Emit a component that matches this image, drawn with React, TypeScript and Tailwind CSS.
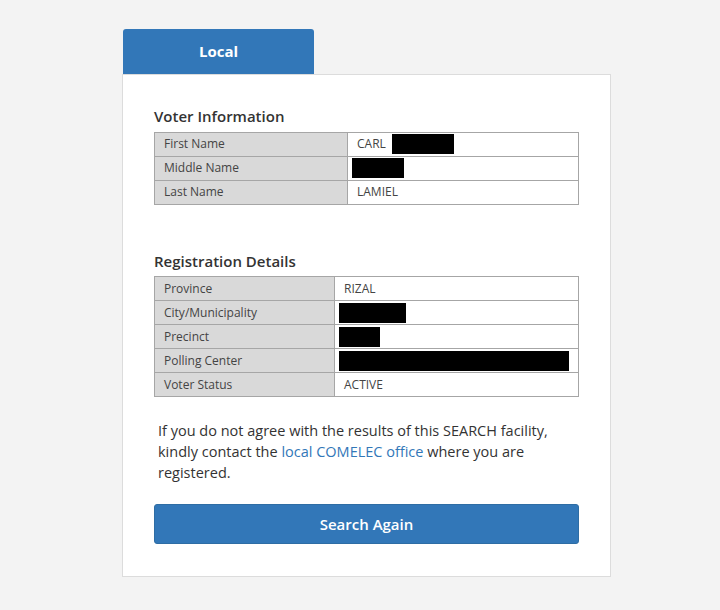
import React from "react";

const font = { fontFamily: '"Open Sans", "Noto Sans", sans-serif' };

function Redact({ w }: { w: number }) {
  return <span className="inline-block bg-black align-middle" style={{ width: w, height: 20 }} />;
}

type Row = { label: string; value: React.ReactNode };

function InfoTable({ rows, labelW }: { rows: Row[]; labelW: string }) {
  return (
    <table className="w-full border-collapse text-[12px] text-[#444]">
      <tbody>
        {rows.map((r, i) => (
          <tr key={i} className="h-[24px]">
            <td className={`${labelW} border border-[#a6a6a6] bg-[#d9d9d9] px-[9px] py-0`}>{r.label}</td>
            <td className="border border-[#a6a6a6] bg-white px-[4px] py-0">{r.value}</td>
          </tr>
        ))}
      </tbody>
    </table>
  );
}

export default function App() {
  return (
    <div className="min-h-[610px] w-[720px] bg-[#f3f3f3] pt-[29px]" style={font}>
      <div className="ml-[122px] w-[489px]">
        <div className="ml-[1px] flex h-[45px] w-[191px] items-center justify-center rounded-t-[3px] bg-[#3277b8] text-[15px] font-bold text-white">
          Local
        </div>
        <div className="h-[503px] border border-[#dcdcdc] bg-white px-[31px] pt-[30px]">
          <h2 className="mb-[4px] text-[15px] font-semibold text-[#333]">Voter Information</h2>
          <InfoTable
            labelW="w-[193px]"
            rows={[
              { label: "First Name", value: <span className="flex items-center gap-[6px] pl-[5px]">CARL <Redact w={62} /></span> },
              { label: "Middle Name", value: <span className="flex pl-0"><Redact w={52} /></span> },
              { label: "Last Name", value: <span className="pl-[5px]">LAMIEL</span> },
            ]}
          />
          <h2 className="mb-[4px] mt-[45px] text-[15px] font-semibold text-[#333]">Registration Details</h2>
          <InfoTable
            labelW="w-[180px]"
            rows={[
              { label: "Province", value: <span className="pl-[5px]">RIZAL</span> },
              { label: "City/Municipality", value: <span className="flex pl-0"><Redact w={67} /></span> },
              { label: "Precinct", value: <span className="flex pl-0"><Redact w={41} /></span> },
              { label: "Polling Center", value: <span className="flex pl-0"><Redact w={230} /></span> },
              { label: "Voter Status", value: <span className="pl-[5px]">ACTIVE</span> },
            ]}
          />
          <p className="mt-[23px] w-[400px] pl-[4px] text-[14.5px] leading-[21px] text-[#333]">
            If you do not agree with the results of this SEARCH facility, kindly contact the{" "}
            <a className="text-[#3277b8]">local COMELEC office</a> where you are registered.
          </p>
          <button className="mt-[21px] flex h-[40px] w-full items-center justify-center rounded-[3px] border border-[#2e6da4] bg-[#3277b8] text-[15px] font-semibold text-white">
            Search Again
          </button>
        </div>
      </div>
    </div>
  );
}
